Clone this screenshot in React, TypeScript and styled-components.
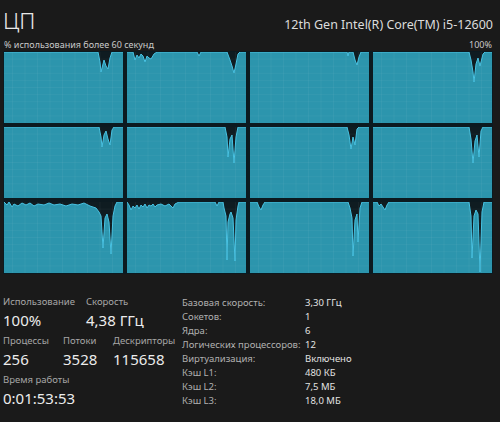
import React from "react";
import styled, { createGlobalStyle } from "styled-components";

const GlobalStyle = createGlobalStyle`
  html, body { margin: 0; padding: 0; background: #1a1a1a; }
  body { font-family: "Noto Sans", "Open Sans", sans-serif; color: #e6e6e6; }
`;

const Page = styled.div`
  width: 500px;
  height: 422px;
  background: #1a1a1a;
  overflow: hidden;
  display: flex;
  flex-direction: column;
`;

const Header = styled.div`
  display: flex;
  align-items: baseline;
  justify-content: space-between;
  padding: 6px 7px 0 3px;
  height: 34px;
  box-sizing: border-box;
`;

const Title = styled.div`
  font-size: 22.5px;
  font-weight: 300;
  line-height: 29px;
  color: #e8e8e8;
`;

const Model = styled.div`
  font-size: 12.5px;
  line-height: 16px;
  color: #dcdcdc;
`;

const Caption = styled.div`
  display: flex;
  justify-content: space-between;
  padding: 5px 8px 0 4px;
  font-size: 9px;
  line-height: 12px;
  color: #c9c9c9;
`;

const GraphGrid = styled.div`
  margin-left: 3px;
  width: 490px;
  height: 223px;
  box-sizing: border-box;
  padding: 1px;
  background: #0c1a20;
  display: grid;
  grid-template-columns: repeat(4, 1fr);
  grid-template-rows: repeat(3, 1fr);
  gap: 4px;
`;

const Cell = styled.div`
  position: relative;
  background: #0f1c21;
  overflow: hidden;
  svg { display: block; width: 100%; height: 100%; }
`;

const Details = styled.div`
  display: flex;
  padding: 21px 0 0 3px;
`;

const Stats = styled.div`
  width: 179px;
  display: flex;
  flex-direction: column;
  gap: 3px;
`;

const StatRow = styled.div`
  display: flex;
`;

const Stat = styled.div<{ $w?: number }>`
  width: ${(p) => (p.$w ? `${p.$w}px` : "auto")};
  display: flex;
  flex-direction: column;
`;

const StatLabel = styled.div`
  font-size: 9.5px;
  line-height: 14px;
  color: #a6a6a6;
  white-space: nowrap;
`;

const StatValue = styled.div`
  font-size: 15px;
  line-height: 22px;
  color: #ececec;
  white-space: nowrap;
`;

const Specs = styled.div`
  display: grid;
  grid-template-columns: 123px auto;
  grid-auto-rows: 14.1px;
  align-items: center;
  font-size: 9.5px;
`;

const SpecLabel = styled.div`
  color: #b0b0b0;
  white-space: nowrap;
`;

const SpecValue = styled.div`
  color: #e2e2e2;
  white-space: nowrap;
`;

type Pt = [number, number];
const W = 119;
const H = 71;

const graphs: Pt[][] = [
  [[0,0],[94,0],[96,10],[97,20],[99,12],[100,8],[102,14],[104,17],[106,6],[108,0],[119,0]],
  [[0,0],[6,0],[8,8],[10,3],[12,6],[14,2],[16,4],[18,10],[20,4],[22,6],[24,7],[27,2],[30,0],[70,0],[72,4],[74,0],[100,0],[103,8],[105,14],[107,21],[109,12],[111,2],[113,0],[119,0]],
  [[0,0],[97,0],[98,4],[99,0],[103,0],[105,8],[107,13],[109,5],[111,0],[119,0]],
  [[0,0],[96,0],[98,8],[100,20],[101,30],[103,12],[105,6],[107,14],[108,10],[110,2],[112,0],[119,0]],
  [[0,0],[95,0],[97,10],[98,20],[100,8],[102,4],[104,12],[106,18],[108,3],[110,0],[119,0]],
  [[0,0],[98,0],[100,10],[101,30],[103,12],[105,8],[107,36],[109,10],[111,0],[119,0]],
  [[0,0],[97,0],[99,8],[101,22],[103,10],[105,18],[107,2],[109,0],[119,0]],
  [[0,0],[96,0],[98,12],[100,36],[102,14],[104,8],[106,30],[108,4],[110,0],[119,0]],
  [[0,0],[3,3],[5,0],[8,5],[10,2],[14,4],[18,1],[22,3],[26,1],[30,4],[34,2],[40,3],[45,1],[50,3],[56,2],[62,4],[68,2],[74,3],[80,1],[86,4],[92,6],[95,10],[97,14],[99,46],[101,16],[103,12],[105,20],[107,52],[109,14],[111,4],[113,0],[119,0]],
  [[0,0],[2,3],[4,8],[6,4],[8,6],[10,3],[12,7],[14,3],[16,5],[18,2],[20,6],[22,3],[24,4],[26,2],[28,5],[30,3],[34,2],[38,4],[42,2],[46,6],[48,2],[52,0],[88,0],[90,4],[92,0],[96,0],[97,6],[99,14],[100,58],[101,20],[103,12],[104,10],[106,16],[108,59],[109,18],[111,4],[112,0],[119,0]],
  [[0,0],[7,0],[9,5],[11,8],[13,3],[15,0],[98,0],[100,6],[102,16],[103,54],[105,18],[107,12],[108,40],[110,6],[112,0],[119,0]],
  [[0,0],[4,0],[6,4],[8,2],[10,5],[12,8],[14,3],[16,0],[96,0],[98,14],[99,56],[101,14],[103,8],[105,12],[107,70],[109,10],[111,0],[119,0]],
];

const Graph: React.FC<{ pts: Pt[] }> = ({ pts }) => {
  const line = pts.map(([x, y], i) => `${i ? "L" : "M"}${x},${y}`).join(" ");
  const area = `${line} L${W},${H} L0,${H} Z`;
  const hLines = Array.from({ length: 9 }, (_, i) => ((i + 1) * H) / 10);
  const vLines = Array.from({ length: 9 }, (_, i) => (i + 1) * 12.5 - 4);
  return (
    <svg viewBox={`0 0 ${W} ${H}`} preserveAspectRatio="none">
      <path d={area} fill="#2c95ad" />
      {hLines.map((y) => (
        <line key={`h${y}`} x1={0} x2={W} y1={y} y2={y} stroke="#ffffff" strokeOpacity={0.045} strokeWidth={1} />
      ))}
      {vLines.map((x) => (
        <line key={`v${x}`} x1={x} x2={x} y1={0} y2={H} stroke="#ffffff" strokeOpacity={0.045} strokeWidth={1} />
      ))}
      <path d={line} fill="none" stroke="#48c2e2" strokeWidth={1} strokeLinejoin="round" />
    </svg>
  );
};

const specs: [string, string][] = [
  ["Базовая скорость:", "3,30 ГГц"],
  ["Сокетов:", "1"],
  ["Ядра:", "6"],
  ["Логических процессоров:", "12"],
  ["Виртуализация:", "Включено"],
  ["Кэш L1:", "480 КБ"],
  ["Кэш L2:", "7,5 МБ"],
  ["Кэш L3:", "18,0 МБ"],
];

export default function App() {
  return (
    <Page>
      <GlobalStyle />
      <Header>
        <Title>ЦП</Title>
        <Model>12th Gen Intel(R) Core(TM) i5-12600</Model>
      </Header>
      <Caption>
        <span>% использования более 60 секунд</span>
        <span>100%</span>
      </Caption>
      <GraphGrid>
        {graphs.map((g, i) => (
          <Cell key={i}>
            <Graph pts={g} />
          </Cell>
        ))}
      </GraphGrid>
      <Details>
        <Stats>
          <StatRow>
            <Stat $w={83}>
              <StatLabel>Использование</StatLabel>
              <StatValue>100%</StatValue>
            </Stat>
            <Stat>
              <StatLabel>Скорость</StatLabel>
              <StatValue>4,38 ГГц</StatValue>
            </Stat>
          </StatRow>
          <StatRow>
            <Stat $w={60}>
              <StatLabel>Процессы</StatLabel>
              <StatValue>256</StatValue>
            </Stat>
            <Stat $w={50}>
              <StatLabel>Потоки</StatLabel>
              <StatValue>3528</StatValue>
            </Stat>
            <Stat>
              <StatLabel>Дескрипторы</StatLabel>
              <StatValue>115658</StatValue>
            </Stat>
          </StatRow>
          <StatRow>
            <Stat>
              <StatLabel>Время работы</StatLabel>
              <StatValue>0:01:53:53</StatValue>
            </Stat>
          </StatRow>
        </Stats>
        <Specs>
          {specs.map(([l, v]) => (
            <React.Fragment key={l}>
              <SpecLabel>{l}</SpecLabel>
              <SpecValue>{v}</SpecValue>
            </React.Fragment>
          ))}
        </Specs>
      </Details>
    </Page>
  );
}
